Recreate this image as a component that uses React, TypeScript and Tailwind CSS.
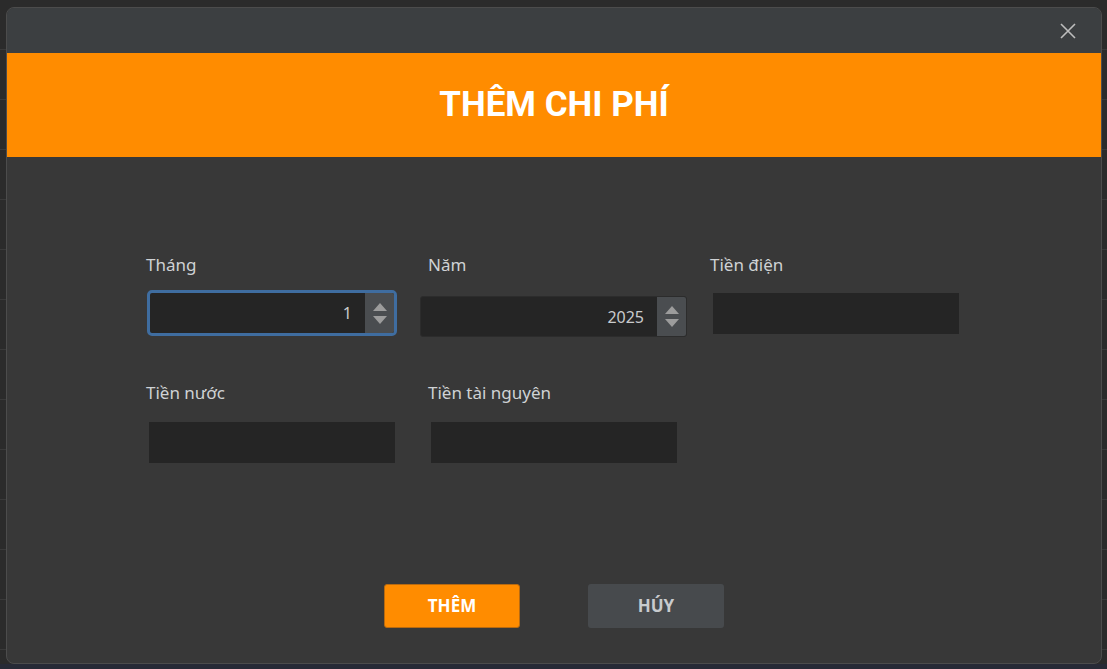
import React from "react";

function Spinner() {
  return (
    <div className="flex h-full w-[29px] flex-col items-center justify-center gap-[5px] bg-[#4a4d50]">
      <svg width="14" height="8" viewBox="0 0 14 8"><path d="M0 8 L7 0 L14 8 Z" fill="#9c9c9c" /></svg>
      <svg width="14" height="8" viewBox="0 0 14 8"><path d="M0 0 L7 8 L14 0 Z" fill="#9c9c9c" /></svg>
    </div>
  );
}

function Label({ children }: { children: React.ReactNode }) {
  return <div className="h-[20px] text-[17px] leading-[20px] text-[#cfd2d4]">{children}</div>;
}

export default function App() {
  const rows = Array.from({ length: 14 });
  return (
    <div
      className="relative h-[669px] w-[1107px] overflow-hidden bg-[#2b2b2b]"
      style={{ fontFamily: '"Noto Sans", "Open Sans", sans-serif' }}
    >
      <div className="flex flex-col">
        {rows.map((_, i) => (
          <div key={i} className="h-[50px] border-b border-[#3a3a3a]" />
        ))}
      </div>
      <div className="absolute bottom-0 left-0 h-[5px] w-full bg-[#272a36]" />

      <div className="absolute left-[6px] top-[7px] flex h-[657px] w-[1096px] flex-col overflow-hidden rounded-[8px] border border-[#4c4c4c] bg-[#383838]">
        <div className="flex h-[45px] items-center justify-end bg-[#3c3f41] pr-[25px]">
          <svg width="16" height="16" viewBox="0 0 16 16">
            <path d="M1 1 L15 15 M15 1 L1 15" stroke="#bdbdbd" strokeWidth="1.6" />
          </svg>
        </div>
        <div className="flex h-[104px] items-center justify-center bg-[#ff8c00]">
          <span
            className="text-[35px] font-bold text-white"
            style={{ fontFamily: "Roboto, sans-serif" }}
          >
            THÊM CHI PHÍ
          </span>
        </div>

        <div className="grid grid-cols-[249px_249px_249px] gap-x-[33px] pl-[139px] pt-[98px]">
          <div className="flex flex-col">
            <Label>Tháng</Label>
            <div className="ml-[1px] mt-[15px] flex h-[46px] w-[250px] overflow-hidden rounded-[5px] border-[3px] border-[#3f6da0] bg-[#252525]">
              <div className="flex flex-1 items-center justify-end pr-[13px] text-[16px] text-[#c9cbcd]">1</div>
              <Spinner />
            </div>
          </div>
          <div className="flex flex-col">
            <Label>Năm</Label>
            <div className="mt-[21px] flex h-[41px] w-[267px] -ml-[8px] overflow-hidden rounded-[3px] border border-[#2c2c2c] bg-[#252525]">
              <div className="flex flex-1 items-center justify-end pr-[13px] text-[16px] text-[#c9cbcd]">2025</div>
              <Spinner />
            </div>
          </div>
          <div className="flex flex-col">
            <Label>Tiền điện</Label>
            <div className="ml-[3px] mt-[18px] h-[41px] w-[246px] bg-[#252525]" />
          </div>

          <div className="mt-[46px] flex flex-col">
            <Label>Tiền nước</Label>
            <div className="ml-[3px] mt-[19px] h-[41px] w-[246px] bg-[#252525]" />
          </div>
          <div className="mt-[46px] flex flex-col">
            <Label>Tiền tài nguyên</Label>
            <div className="ml-[3px] mt-[19px] h-[41px] w-[246px] bg-[#252525]" />
          </div>
        </div>

        <div className="mt-[121px] flex justify-center gap-[68px]">
          <div className="flex h-[44px] w-[136px] items-center justify-center rounded-[3px] border border-[#b86a10] bg-[#ff8c00] text-[17px] font-bold text-white">
            THÊM
          </div>
          <div className="flex h-[44px] w-[136px] items-center justify-center rounded-[3px] bg-[#474a4d] text-[17px] font-bold text-[#c8cbce]">
            HÚY
          </div>
        </div>
      </div>
    </div>
  );
}
